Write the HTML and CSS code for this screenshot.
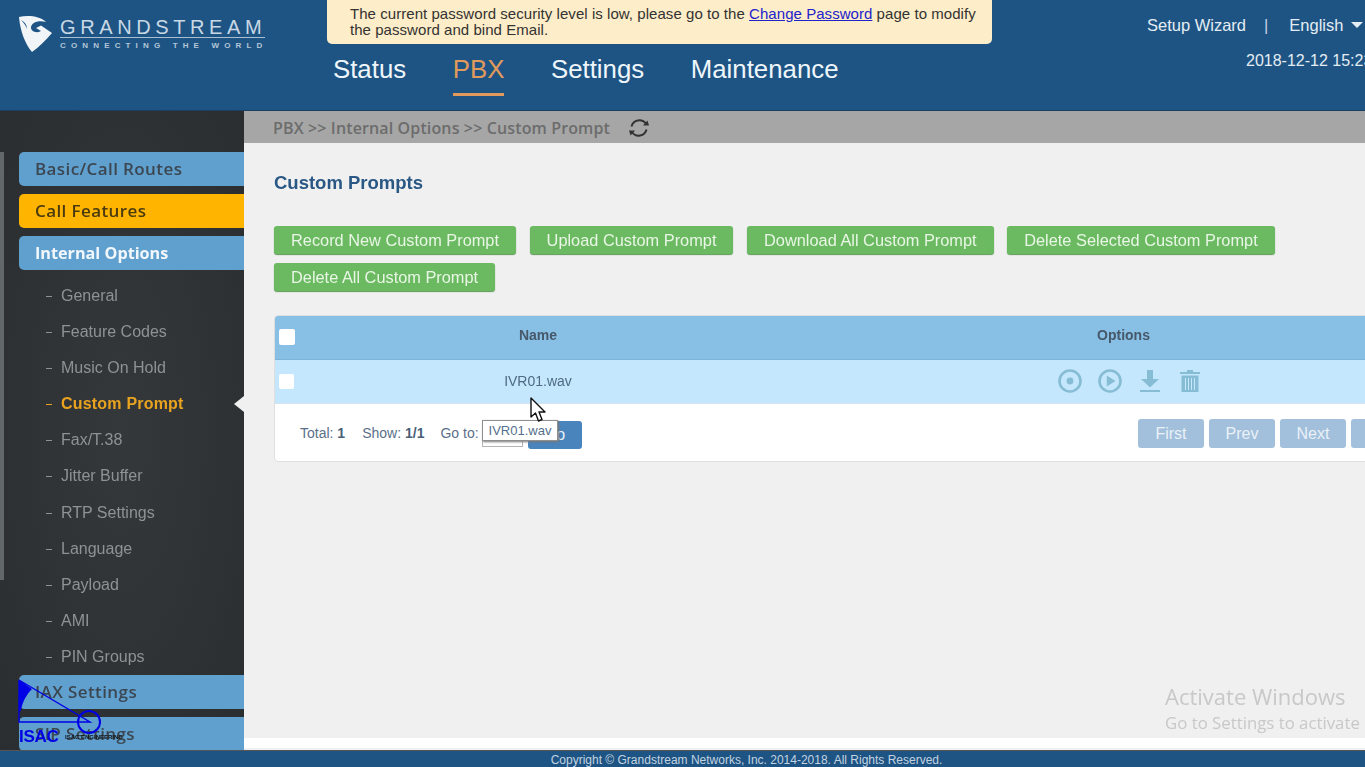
FILE: index.html
```html
<!DOCTYPE html>
<html lang="en">
<head>
<meta charset="utf-8">
<title>Custom Prompt</title>
<link rel="stylesheet" href="styles.css">
</head>
<body>
<div class="page">
  <header class="header">
    <div class="brand">
      <svg class="brand-mark" viewBox="0 0 36 36" width="36" height="36" aria-hidden="true">
        <path d="M1 1 C10 -1 22 0 28 6 C21 4 14 6 13 11 C12.5 15 18 18 23 15 L18 12 L23 9.5 L34 17 C28 24 21 31 14 36 C7 28 2 14 1 1 Z" fill="#f1f5f8"/>
        <path d="M3 4 C7 6 9 9 9 13 C8 10 6 7 3 4 Z" fill="#1e5483"/>
      </svg>
      <div class="brand-text">
        <div class="brand-name">GRANDSTREAM</div>
        <div class="brand-tag">CONNECTING THE WORLD</div>
      </div>
    </div>
    <div class="header-mid">
      <div class="notice">The current password security level is low, please go to the <a href="#">Change Password</a> page to modify the password and bind Email.</div>
      <nav class="nav">
        <span class="nav-item">Status</span>
        <span class="nav-item nav-active">PBX</span>
        <span class="nav-item">Settings</span>
        <span class="nav-item">Maintenance</span>
      </nav>
    </div>
    <div class="header-right">
      <div class="top-links">
        <span>Setup Wizard</span><span class="sep">|</span><span>English</span><span class="caret"></span>
      </div>
      <div class="clock">2018-12-12 15:23:41</div>
    </div>
  </header>

  <div class="body">
    <aside class="side">
      <div class="side-btn">Basic/Call Routes</div>
      <div class="side-btn side-orange">Call Features</div>
      <div class="side-btn side-open">Internal Options</div>
      <ul class="sub">
        <li>General</li>
        <li>Feature Codes</li>
        <li>Music On Hold</li>
        <li class="sub-active">Custom Prompt</li>
        <li>Fax/T.38</li>
        <li>Jitter Buffer</li>
        <li>RTP Settings</li>
        <li>Language</li>
        <li>Payload</li>
        <li>AMI</li>
        <li>PIN Groups</li>
      </ul>
      <div class="side-btn">IAX Settings</div>
      <div class="side-btn">SIP Settings</div>
    </aside>

    <main class="main">
      <div class="crumb">
        <span>PBX &gt;&gt; Internal Options &gt;&gt; Custom Prompt</span>
        <svg class="refresh" viewBox="0 0 22 22" width="22" height="22" aria-hidden="true">
          <path d="M3.5 9.5 A8 8 0 0 1 18 7" fill="none" stroke="#333" stroke-width="2"/>
          <path d="M18.5 12.5 A8 8 0 0 1 4 15" fill="none" stroke="#333" stroke-width="2"/>
          <path d="M15 8.5 L21 8.5 L19.5 3.5 Z M7 13.5 L1 13.5 L2.5 18.5 Z" fill="#333"/>
        </svg>
      </div>
      <div class="content">
        <h1 class="title">Custom Prompts</h1>
        <div class="actions">
          <button class="btn">Record New Custom Prompt</button>
          <button class="btn">Upload Custom Prompt</button>
          <button class="btn">Download All Custom Prompt</button>
          <button class="btn">Delete Selected Custom Prompt</button>
          <button class="btn">Delete All Custom Prompt</button>
        </div>
        <div class="table">
          <div class="row row-head">
            <div class="cell-check"><span class="check"></span></div>
            <div class="cell-name">Name</div>
            <div class="cell-opts">Options</div>
          </div>
          <div class="row row-body">
            <div class="cell-check"><span class="check check-small"></span></div>
            <div class="cell-name">IVR01.wav</div>
            <div class="cell-opts icons">
              <svg viewBox="0 0 24 24" width="24" height="24" aria-hidden="true"><circle cx="12" cy="12" r="10.5" fill="none" stroke="#86bdd4" stroke-width="2.6"/><circle cx="12" cy="12" r="3.4" fill="#86bdd4"/></svg>
              <svg viewBox="0 0 24 24" width="24" height="24" aria-hidden="true"><circle cx="12" cy="12" r="10.5" fill="none" stroke="#86bdd4" stroke-width="2.6"/><path d="M8.8 6.5 L17.5 12 L8.8 17.5 Z" fill="#86bdd4"/></svg>
              <svg viewBox="0 0 24 24" width="24" height="24" aria-hidden="true"><path d="M9 1 H15 V10 H21 L12 18.5 L3 10 H9 Z M2 21 H22 V23 H2 Z" fill="#86bdd4"/></svg>
              <svg viewBox="0 0 24 24" width="24" height="24" aria-hidden="true"><path d="M9 1 H15 V3 H22 V5 H2 V3 H9 Z M3.5 6.5 H20.5 V23 H3.5 Z" fill="#86bdd4"/><path d="M7.5 9 V21 M10.5 9 V21 M13.5 9 V21 M16.5 9 V21" stroke="#c5e7fd" stroke-width="1"/></svg>
            </div>
          </div>
          <div class="pager">
            <span>Total: <b>1</b></span>
            <span>Show: <b>1/1</b></span>
            <span class="goto">Go to:<span class="go-input"></span><span class="go-btn">Go</span></span>
            <div class="pager-btns">
              <span class="pg">First</span>
              <span class="pg">Prev</span>
              <span class="pg">Next</span>
              <span class="pg">Last</span>
            </div>
          </div>
        </div>
      </div>
      <div class="strip"></div>
    </main>
  </div>

  <footer class="footer">Copyright © Grandstream Networks, Inc. 2014-2018. All Rights Reserved.</footer>

  <div class="scroll-thumb"></div>
  <div class="tooltip">IVR01.wav</div>
  <svg class="cursor" viewBox="0 0 16 26" width="16" height="26" aria-hidden="true">
    <path d="M1 1 V20 L5.5 16 L8.5 24 L12 22.5 L9 15 H15 Z" fill="#fff" stroke="#111" stroke-width="1.4" stroke-linejoin="round"/>
  </svg>
  <div class="activate">
    <div class="activate-big">Activate Windows</div>
    <div class="activate-small">Go to Settings to activate</div>
  </div>
  <div class="wm">
    <svg class="wm-art" viewBox="0 0 90 56" width="90" height="56" aria-hidden="true">
      <path d="M1 1 L14 10 C8 16 4 24 3 32 L1 32 Z" fill="#0000e6"/>
      <path d="M1 1 V43 H72 L1 1" fill="none" stroke="#0000e6" stroke-width="1.4"/>
      <circle cx="71" cy="43" r="11" fill="none" stroke="#0000e6" stroke-width="2"/>
    </svg>
    <span class="wm-logo">ISAC</span>
    <span class="wm-name">ISAC ENGINEERING</span>
  </div>
</div>
</body>
</html>
```
FILE: styles.css
```css
* { box-sizing: border-box; }
html, body { margin: 0; padding: 0; height: 100%; overflow: hidden; }
body { font-family: "Liberation Sans", Arial, sans-serif; background: #1e5483; }
.page { position: relative; width: 1365px; height: 767px; overflow: hidden; display: flex; flex-direction: column; filter: blur(0.35px); }

.header { height: 111px; flex: none; background: #1e5483; display: flex; border-bottom: 1px solid #1a3f60; }
.brand { width: 327px; flex: none; display: flex; padding: 15px 0 0 18px; align-items: flex-start; }
.brand-mark { flex: none; margin-top: 1px; }
.brand-text { margin-left: 6px; width: 205px; }
.brand-name { font-size: 20px; line-height: 21px; color: #c9d8e5; letter-spacing: 4.6px; white-space: nowrap; border-bottom: 1px solid #a8bfd3; padding: 2px 0 1px; height: 23px; overflow: hidden; }
.brand-tag { font-size: 8px; line-height: 10px; margin-top: 3px; color: #b3c6d8; letter-spacing: 5.15px; white-space: nowrap; font-weight: 700; }

.header-mid { width: 665px; flex: none; }
.notice { height: 44px; background: #fdedc8; border-radius: 0 0 5px 5px; padding: 6px 10px 0 23px; font-size: 15px; letter-spacing: 0.05px; line-height: 16px; color: #333; }
.notice a { color: #2222cc; }
.nav { display: flex; gap: 46.6px; padding: 8px 0 0 6px; }
.nav-item { font-size: 25.8px; line-height: 34px; color: #eef6fb; padding-bottom: 7px; border-bottom: 3px solid transparent; height: 44px; }
.nav-active { color: #e09a5c; border-bottom-color: #e09a5c; }

.header-right { flex: 1; min-width: 0; overflow: hidden; padding-left: 155px; color: #e4edf4; white-space: nowrap; }
.top-links { display: flex; align-items: center; font-size: 16.5px; line-height: 20px; margin-top: 15px; }
.sep { margin: 0 21px 0 18px; color: #c8cfe6; }
.caret { width: 0; height: 0; border-left: 6px solid transparent; border-right: 6px solid transparent; border-top: 6px solid #e4edf4; margin-left: 8px; }
.clock { margin: 16px 0 0 99px; font-size: 16px; line-height: 20px; }

.body { flex: 1; min-height: 0; display: flex; }

.side { width: 244px; flex: none; overflow: hidden; padding: 41px 0 0 19px; background: radial-gradient(ellipse at 50% 50%, #34383a 0%, #2b2e30 100%); }
.side-btn { height: 34px; margin-bottom: 8px; padding-left: 16px; background: #5fa0cf; border-radius: 5px 0 0 5px; font-family: "Open Sans", sans-serif; font-weight: 600; font-size: 17px; letter-spacing: 0.4px; line-height: 34px; color: #3c4650; white-space: nowrap; }
.side-orange { background: #ffb400; color: #4a3a10; }
.side-open { color: #f2f7fb; font-weight: 700; font-size: 16.2px; letter-spacing: 0; }
.sub { list-style: none; margin: 0; padding: 0; }
.sub li { position: relative; height: 36.1px; line-height: 36.1px; padding-left: 42px; font-size: 16px; color: #8e9293; }
.sub li::before { content: ""; position: absolute; left: 27px; top: 18px; width: 6px; height: 1px; background: #8e9293; }
.sub li.sub-active { color: #eaa31f; font-weight: 700; letter-spacing: 0.2px; }
.sub li.sub-active::before { background: #eaa31f; }
.sub li.sub-active::after { content: ""; position: absolute; right: 0; top: 10px; border-top: 8px solid transparent; border-bottom: 8px solid transparent; border-right: 10px solid #f0f0f0; }

.main { flex: 1; min-width: 0; display: flex; flex-direction: column; background: #f0f0f0; overflow: hidden; }
.crumb { height: 32px; flex: none; background: #a6a6a6; display: flex; align-items: center; gap: 18px; padding: 2px 0 0 29px; font-family: "Open Sans", sans-serif; font-weight: 600; font-size: 16px; letter-spacing: 0.13px; color: #6c6c6c; white-space: nowrap; }
.refresh { flex: none; }
.content { flex: 1; min-height: 0; padding: 29px 0 0 30px; }
.title { margin: 0; font-size: 18.5px; line-height: 22px; font-weight: 700; color: #2a5885; }
.actions { display: flex; flex-wrap: wrap; gap: 9px 13.6px; margin-top: 32px; width: 1060px; }
.btn { height: 28px; padding: 0 17px; border: 0; border-radius: 3px; background: #6bba62; color: #e9f6e5; font: 16.35px/28px "Liberation Sans", Arial, sans-serif; box-shadow: 0 1px 1px #5a9b54; }

.table { margin-top: 24px; width: 1196px; background: #fff; border: 1px solid #dedede; border-radius: 4px; overflow: hidden; }
.row { display: flex; align-items: center; }
.row-head { height: 44px; padding-bottom: 5px; background: #88bfe4; font-weight: 700; font-size: 14px; color: #46586a; border-bottom: 1px solid #7fb4d8; }
.row-body { height: 44px; padding-bottom: 1px; background: #c5e7fd; font-size: 14px; color: #4e6a85; border-bottom: 1px solid #d5e5ef; }
.cell-check { width: 25px; flex: none; padding-left: 4px; display: flex; }
.row-head .cell-check { padding-top: 3px; }
.cell-name { width: 476px; flex: none; text-align: center; }
.cell-opts { flex: 1; text-align: center; padding-left: 2px; }
.check { width: 16px; height: 16px; background: #fff; border-radius: 2px; display: block; }
.check-small { width: 15px; height: 15px; }
.icons { display: flex; gap: 16px; padding-left: 282px; text-align: left; }
.icons svg { display: block; flex: none; }

.pager { height: 57px; display: flex; align-items: center; padding: 0 52px 0 25px; font-size: 14px; color: #5a7089; gap: 17px; }
.pager b { color: #4a5f78; }
.goto { display: flex; align-items: center; margin-left: -1px; }
.go-input { width: 41px; height: 16px; margin: 13px 0 0 3px; border: 1px solid #b5b5b5; background: #fff; }
.go-btn { width: 54px; height: 28px; margin: 4px 0 0 5px; border-radius: 3px; background: #4a84bd; color: #e8f0f7; font-size: 16px; line-height: 28px; text-align: center; }
.pager-btns { display: flex; gap: 5px; margin: 2px 0 0 auto; }
.pg { width: 66px; height: 29px; border-radius: 3px; background: #a2c0dc; color: #eaf1f7; font-size: 16px; line-height: 29px; text-align: center; }

.strip { height: 10px; flex: none; margin-bottom: 2px; background: #fff; }
.footer { height: 17px; flex: none; background: #1e5483; border-top: 1px solid #555; color: #c3d3e0; font-size: 12px; line-height: 19px; text-align: center; padding-left: 128px; }

.scroll-thumb { position: absolute; left: 0; top: 152px; width: 4px; height: 428px; background: #62676a; }
.tooltip { position: absolute; left: 482px; top: 420px; width: 76px; height: 21px; background: #fff; border: 1px solid #8f8f8f; box-shadow: 1px 1px 2px #777; font-size: 13px; line-height: 19px; color: #55708c; text-align: center; }
.cursor { position: absolute; left: 530px; top: 397px; }
.activate { position: absolute; left: 1165px; top: 683px; width: 200px; overflow: hidden; white-space: nowrap; font-family: "Open Sans", sans-serif; color: #c8c8c8; }
.activate-big { font-size: 22px; line-height: 27px; }
.activate-small { font-size: 16.8px; line-height: 26px; }
.wm { position: absolute; left: 18px; top: 679px; width: 110px; height: 66px; }
.wm-art { position: absolute; left: 0; top: 0; }
.wm-logo { position: absolute; left: 1px; top: 49px; font-size: 17px; line-height: 17px; font-weight: 700; color: #0000e6; letter-spacing: -0.3px; }
.wm-name { position: absolute; left: 47px; top: 53px; font-size: 6px; line-height: 10px; color: #111; font-weight: 700; white-space: nowrap; }
```
